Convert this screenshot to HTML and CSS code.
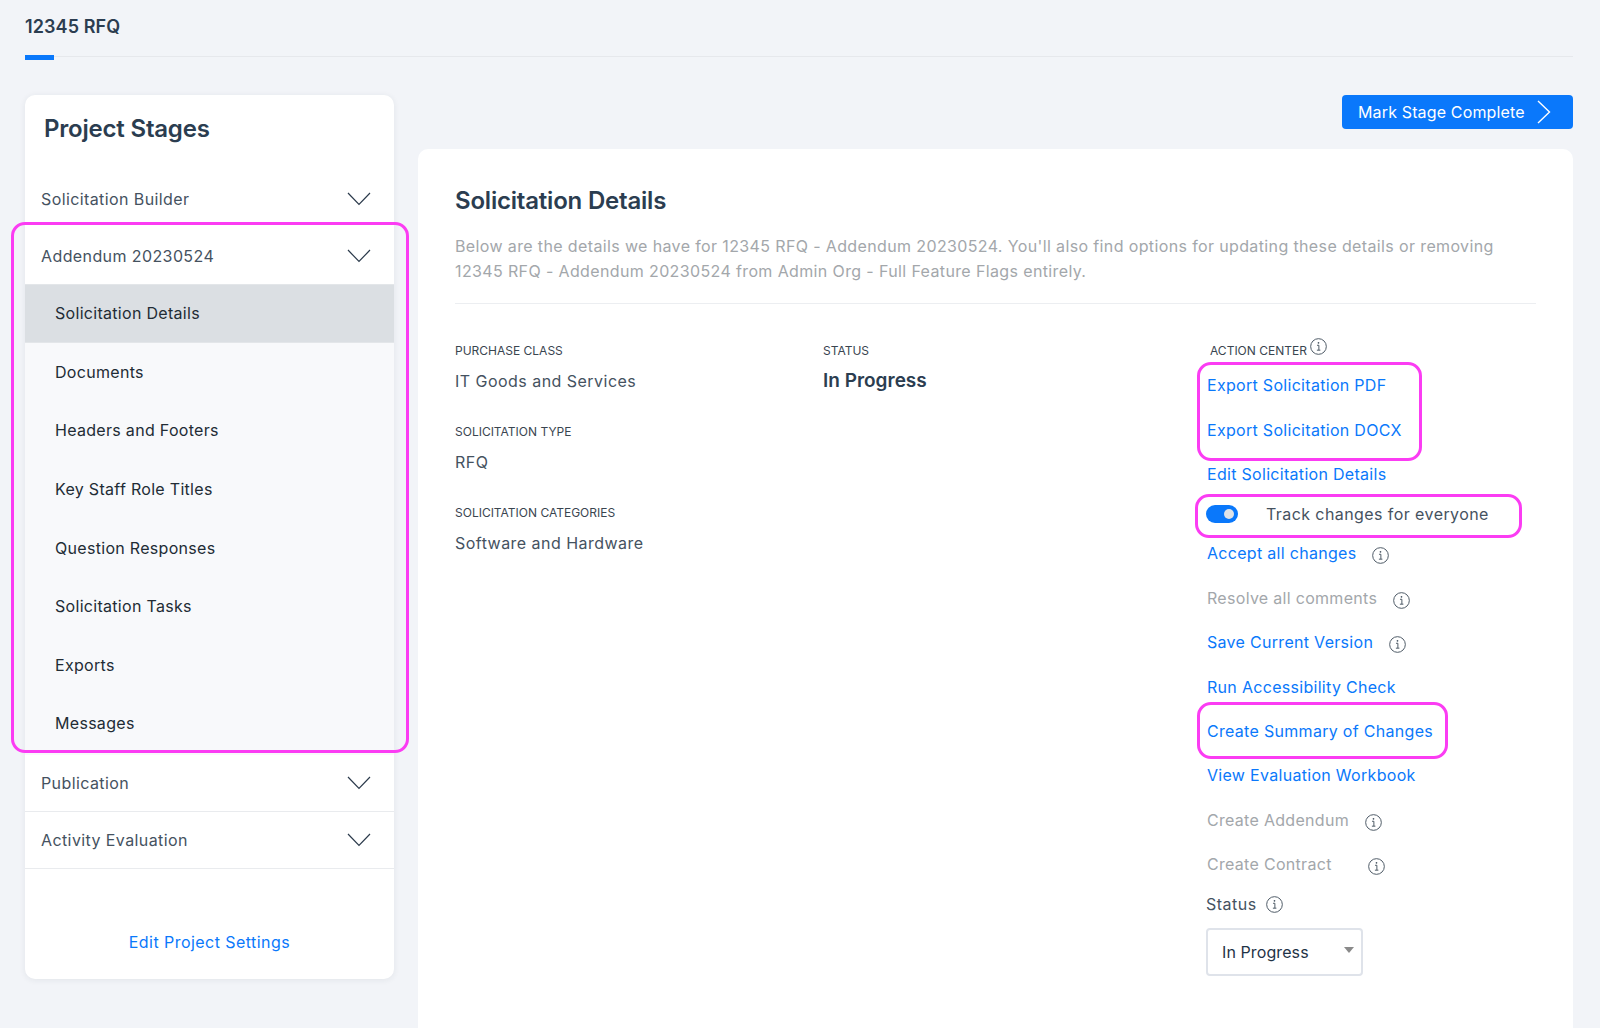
FILE: index.html
```html
<!DOCTYPE html>
<html lang="en">
<head>
<meta charset="utf-8">
<title>12345 RFQ</title>
<link rel="stylesheet" href="styles.css">
</head>
<body>
<svg class="sprite" aria-hidden="true">
  <symbol id="chev" viewBox="0 0 24 14"><path d="M1 1l11 11.5L23 1" fill="none" stroke="currentColor" stroke-width="1.2"/></symbol>
  <symbol id="info" viewBox="0 0 18 18"><circle cx="9" cy="9" r="8.3" fill="none" stroke="currentColor" stroke-width="1"/><path d="M7.4 7.7H9.4V12.8M7.3 12.9H11" fill="none" stroke="currentColor" stroke-width="1"/><circle cx="9" cy="5.1" r="0.9" fill="currentColor"/></symbol>
</svg>
<div class="page">
  <header class="tabs">
    <div class="tab">12345 RFQ</div>
  </header>
  <div class="layout">
    <aside class="side">
      <h2 class="side-title">Project Stages</h2>
      <div class="stage"><span>Solicitation Builder</span><svg class="chev"><use href="#chev"/></svg></div>
      <div class="stage"><span>Addendum 20230524</span><svg class="chev"><use href="#chev"/></svg></div>
      <nav class="subs">
        <a class="sub active">Solicitation Details</a>
        <a class="sub">Documents</a>
        <a class="sub">Headers and Footers</a>
        <a class="sub">Key Staff Role Titles</a>
        <a class="sub">Question Responses</a>
        <a class="sub">Solicitation Tasks</a>
        <a class="sub">Exports</a>
        <a class="sub">Messages</a>
      </nav>
      <div class="stage ruled"><span>Publication</span><svg class="chev"><use href="#chev"/></svg></div>
      <div class="stage ruled"><span>Activity Evaluation</span><svg class="chev"><use href="#chev"/></svg></div>
      <a class="settings">Edit Project Settings</a>
    </aside>
    <div class="content">
      <div class="toolbar">
        <button class="complete">Mark Stage Complete<svg class="complete-chev" viewBox="0 0 14 24"><path d="M1 1l11.5 11L1 23" fill="none" stroke="currentColor" stroke-width="1.4"/></svg></button>
      </div>
      <main class="card">
        <h1 class="card-title">Solicitation Details</h1>
        <p class="desc">Below are the details we have for 12345 RFQ - Addendum 20230524. You'll also find options for updating these details or removing 12345 RFQ - Addendum 20230524 from Admin Org - Full Feature Flags entirely.</p>
        <div class="cols">
          <div class="col-a">
            <div class="field"><div class="label">PURCHASE CLASS</div><div class="value">IT Goods and Services</div></div>
            <div class="field"><div class="label">SOLICITATION TYPE</div><div class="value">RFQ</div></div>
            <div class="field"><div class="label">SOLICITATION CATEGORIES</div><div class="value">Software and Hardware</div></div>
          </div>
          <div class="col-b">
            <div class="field"><div class="label">STATUS</div><div class="value strong">In Progress</div></div>
          </div>
          <div class="col-c">
            <div class="action-head"><span class="label">ACTION CENTER</span><svg class="info"><use href="#info"/></svg></div>
            <a class="act">Export Solicitation PDF</a>
            <a class="act">Export Solicitation DOCX</a>
            <a class="act">Edit Solicitation Details</a>
            <div class="track"><span class="toggle"><span class="knob"></span></span><span>Track changes for everyone</span></div>
            <a class="act">Accept all changes<svg class="info gap16"><use href="#info"/></svg></a>
            <a class="act off">Resolve all comments<svg class="info gap16"><use href="#info"/></svg></a>
            <a class="act">Save Current Version<svg class="info gap16"><use href="#info"/></svg></a>
            <a class="act">Run Accessibility Check</a>
            <a class="act">Create Summary of Changes</a>
            <a class="act">View Evaluation Workbook</a>
            <a class="act off">Create Addendum<svg class="info gap16"><use href="#info"/></svg></a>
            <a class="act off">Create Contract<svg class="info gap36"><use href="#info"/></svg></a>
            <div class="status-label">Status<svg class="info"><use href="#info"/></svg></div>
            <div class="select"><span>In Progress</span><span class="caret"></span></div>
          </div>
        </div>
      </main>
    </div>
  </div>
  <div class="mark mark-stage"></div>
  <div class="mark mark-export"></div>
  <div class="mark mark-track"></div>
  <div class="mark mark-summary"></div>
</div>
</body>
</html>
```
FILE: styles.css
```css
* { box-sizing: border-box; }
html, body { margin: 0; height: 100%; }
body {
  background: #f2f4f8;
  color: #2b3d50;
  font-family: Inter, "Noto Sans", sans-serif;
  font-size: 16px;
  overflow: hidden;
}
.sprite { position: absolute; width: 0; height: 0; }
.page { position: relative; width: 1600px; height: 1028px; display: flex; flex-direction: column; padding: 0 27px 0 25px; }

.tabs { height: 57px; border-bottom: 1px solid #e6e8ec; flex: none; }
.tab {
  position: relative;
  height: 56px;
  padding-top: 15px;
  font-size: 18px;
  letter-spacing: .1px;
  line-height: 24px;
  font-weight: 600;
  color: #2b3d50;
}
.tab::after {
  content: "";
  position: absolute;
  left: 0;
  top: 55px;
  width: 29px;
  height: 5px;
  background: #0a78fb;
}

.layout { flex: 1; display: flex; gap: 24px; padding-top: 38px; min-height: 0; }

.side {
  width: 369px;
  height: 884px;
  flex: none;
  background: #fff;
  border-radius: 10px;
  box-shadow: 0 1px 6px rgba(40, 50, 70, .08);
  display: flex;
  flex-direction: column;
}
.side-title { margin: 0; padding: 19px 19px 0; height: 75px; font-size: 24px; letter-spacing: -.2px; line-height: 30px; font-weight: 600; color: #2b3d50; }
.stage {
  height: 57px;
  flex: none;
  padding: 0 23px 0 16px;
  display: flex;
  align-items: center;
  justify-content: space-between;
  color: #45525f;
  font-size: 16px;
  letter-spacing: .4px;
}
.stage.ruled { border-bottom: 1px solid #e9ebee; }
.chev { width: 24px; height: 14px; color: #2b3a4b; }
.subs { background: #f8f9fb; flex: none; height: 471px; display: flex; flex-direction: column; }
.sub { height: 58.6px; flex: none; padding-left: 30px; display: flex; align-items: center; color: #222c35; font-size: 16px; letter-spacing: .3px; }
.sub.active { background: #dbdfe3; border-top: 1px solid #e3e6e9; border-bottom: 1px solid #e3e6e9; }
.settings { margin-top: 61px; text-align: center; color: #0a78fb; font-size: 16px; line-height: 24px; letter-spacing: .45px; }

.content { flex: 1; min-width: 0; display: flex; flex-direction: column; }
.toolbar { height: 54px; flex: none; display: flex; justify-content: flex-end; align-items: flex-start; }
.complete {
  width: 231px;
  height: 34px;
  border: 0;
  border-radius: 4px;
  background: #0a78fb;
  color: #fff;
  font: 400 16px Inter, sans-serif;
  letter-spacing: .15px;
  padding: 0 22px 0 16px;
  display: flex;
  align-items: center;
  justify-content: space-between;
}
.complete-chev { width: 14px; height: 24px; }

.card { flex: 1; background: #fff; border-radius: 10px 10px 0 0; padding: 37px 37px 0; }
.card-title { margin: 0; font-size: 24px; letter-spacing: -.2px; line-height: 30px; font-weight: 600; color: #2b3d50; }
.desc { margin: 18px 0 0; padding-bottom: 19px; border-bottom: 1px solid #eceef1; color: #a3a7ab; font-size: 16px; line-height: 25px; letter-spacing: .37px; }
.cols { display: flex; padding-top: 38px; }
.col-a { width: 368px; flex: none; }
.col-b { width: 384px; flex: none; }
.col-c { flex: 1; display: flex; flex-direction: column; margin-top: -4px; }
.field { height: 81px; }
.label { font-size: 12px; line-height: 18px; font-weight: 400; color: #3a4550; display: block; }
.value { margin-top: 9px; font-size: 16px; line-height: 24px; color: #45525f; letter-spacing: .47px; }
.value.strong { font-size: 19px; font-weight: 600; color: #2b3d50; margin-top: 9px; letter-spacing: 0; }
.action-head { height: 25px; padding-left: 3px; display: flex; align-items: flex-start; gap: 3px; }
.action-head .label { padding-top: 4px; }
.info { width: 17px; height: 17px; color: #45525f; flex: none; }
.act { height: 44.4px; display: flex; align-items: center; color: #0a78fb; font-size: 16px; flex: none; letter-spacing: .3px; }
.act.off { color: #a3a7ab; }
.gap16 { margin-left: 16px; margin-top: 5px; }
.gap36 { margin-left: 36px; margin-top: 5px; }
.track { height: 35px; flex: none; display: flex; align-items: center; color: #45525f; letter-spacing: .42px; }
.toggle { width: 32px; height: 18px; margin-left: -1px; margin-right: 28px; border-radius: 9px; background: #0a78fb; position: relative; }
.knob { position: absolute; right: 4px; top: 4px; width: 10px; height: 10px; border-radius: 50%; background: #dfe3e8; }
.status-label { height: 36px; margin-left: -1px; display: flex; align-items: center; gap: 9px; color: #45525f; font-size: 16px; letter-spacing: .5px; }
.select {
  margin-top: 6px;
  margin-left: -1px;
  width: 157px;
  height: 48px;
  border: 2px solid #dfe3ea;
  border-radius: 4px;
  padding: 0 7px 0 14px;
  display: flex;
  align-items: center;
  justify-content: space-between;
  color: #1f3347;
  font-size: 16px;
  letter-spacing: .1px;
}
.caret { width: 0; height: 0; border: 5px solid transparent; border-top: 6px solid #8a8a8a; border-bottom: 0; margin-top: -4px; }

.mark { position: absolute; border: 3px solid #fb3cf3; pointer-events: none; border-radius: 14px; }
.mark-stage { left: 11px; top: 222px; width: 398px; height: 531px; }
.mark-export { left: 1197px; top: 362px; width: 225px; height: 99px; }
.mark-track { left: 1195px; top: 494px; width: 327px; height: 44px; }
.mark-summary { left: 1197px; top: 702px; width: 251px; height: 57px; }
```
